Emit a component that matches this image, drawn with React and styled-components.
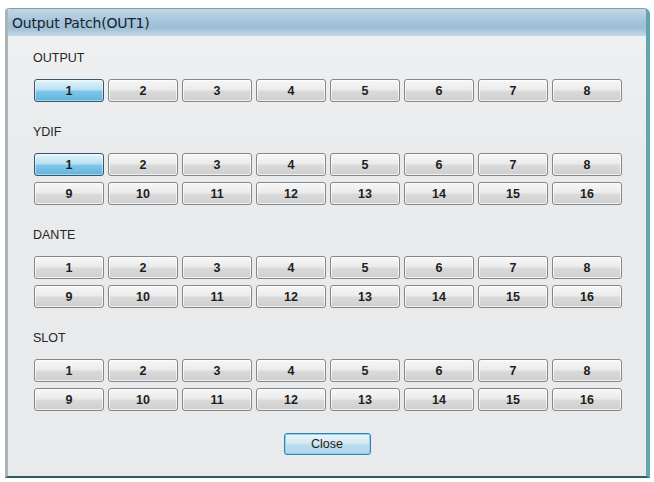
import React from 'react';
import styled, { createGlobalStyle } from 'styled-components';

const GlobalStyle = createGlobalStyle`
  html, body {
    margin: 0;
    padding: 0;
    background: #ffffff;
  }
  body {
    font-family: "Liberation Sans", Arial, sans-serif;
  }
`;

const Window = styled.div`
  box-sizing: border-box;
  margin: 8px 4px 0 5px;
  width: 645px;
  height: 470px;
  display: flex;
  flex-direction: column;
  border-left: 3px solid #a9b3b8;
  border-right: 4px solid #5fa7ae;
  border-bottom: 2px solid #2c5b60;
  border-top-right-radius: 6px;
  border-top-left-radius: 4px;
  background: #e8eaeb;
  overflow: hidden;
`;

const TitleBar = styled.div`
  height: 27px;
  flex-shrink: 0;
  display: flex;
  align-items: center;
  padding-left: 4px;
  background: linear-gradient(to bottom, #c3d7e6 0%, #a6c4db 45%, #9ebfd7 70%, #c4d8e6 100%);
  border-top: 1px solid #7f9cb0;
  font-family: "DejaVu Sans", Tahoma, sans-serif;
  font-size: 14px;
  letter-spacing: -0.2px;
  color: #16222c;
`;

const Content = styled.div`
  flex: 1;
  display: flex;
  flex-direction: column;
  gap: 22px;
  padding: 14px 0 0 26px;
  background: linear-gradient(to bottom, #eef0f1 0%, #e8eaeb 30%);
`;

const Section = styled.section`
  display: flex;
  flex-direction: column;
`;

const Label = styled.div`
  height: 16px;
  line-height: 16px;
  margin: 0 0 13px -1px;
  font-size: 12.5px;
  color: #262626;
`;

const ButtonGrid = styled.div`
  display: grid;
  grid-template-columns: repeat(8, 70px);
  grid-auto-rows: 23px;
  column-gap: 4px;
  row-gap: 6px;
`;

const PatchButton = styled.button`
  box-sizing: border-box;
  margin: 0;
  padding: 0;
  border: 1px solid ${p => (p.$active ? '#3d5566' : '#848687')};
  border-radius: 3px;
  background: ${p =>
    p.$active
      ? 'linear-gradient(to bottom, #e6f4fb 0%, #b9e0f3 45%, #7fc6e8 55%, #5cb4df 100%)'
      : 'linear-gradient(to bottom, #f7f7f7 0%, #ebebeb 45%, #d9d9d9 55%, #cfcfcf 100%)'};
  box-shadow: inset 0 0 0 1px ${p => (p.$active ? 'rgba(255,255,255,0.45)' : 'rgba(255,255,255,0.7)')};
  font-family: "Liberation Sans Narrow", "Liberation Sans", Arial, sans-serif;
  font-size: 12.5px;
  font-weight: bold;
  color: #1e1e1e;
`;

const Footer = styled.div`
  display: flex;
  justify-content: center;
  margin-left: -26px;
`;

const CloseButton = styled.button`
  box-sizing: border-box;
  width: 87px;
  height: 22px;
  margin: 0;
  border: 1px solid #2f84ad;
  border-radius: 3px;
  background: linear-gradient(to bottom, #eef6fa 0%, #d6e9f3 45%, #bcdcec 55%, #b2d6ea 100%);
  box-shadow: inset 0 0 0 1px #8fd0ee;
  font-family: "Liberation Sans", Arial, sans-serif;
  font-size: 12.5px;
  color: #1a1a1a;
`;

const sections = [
  { name: 'OUTPUT', count: 8, active: 1 },
  { name: 'YDIF', count: 16, active: 1 },
  { name: 'DANTE', count: 16, active: null },
  { name: 'SLOT', count: 16, active: null },
];

const App = () => (
  <>
    <GlobalStyle />
    <Window>
      <TitleBar>Output Patch(OUT1)</TitleBar>
      <Content>
        {sections.map(s => (
          <Section key={s.name}>
            <Label>{s.name}</Label>
            <ButtonGrid>
              {Array.from({ length: s.count }, (_, i) => (
                <PatchButton key={i} $active={s.active === i + 1}>
                  {i + 1}
                </PatchButton>
              ))}
            </ButtonGrid>
          </Section>
        ))}
        <Footer>
          <CloseButton>Close</CloseButton>
        </Footer>
      </Content>
    </Window>
  </>
);

export default App;
